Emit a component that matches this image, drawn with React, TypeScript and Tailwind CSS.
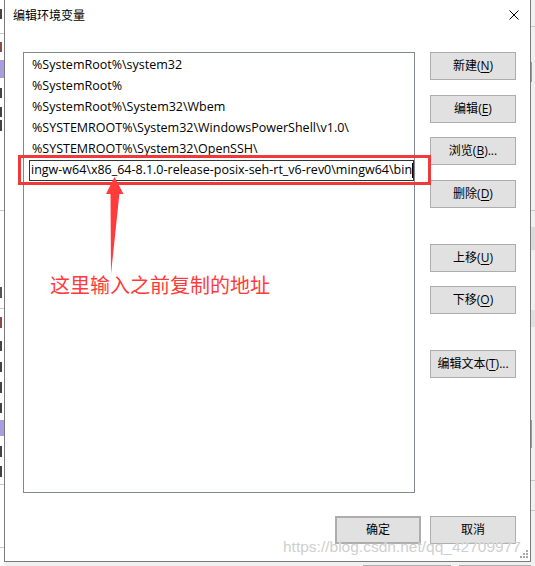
const paths = [
  "%SystemRoot%\\system32",
  "%SystemRoot%",
  "%SystemRoot%\\System32\\Wbem",
  "%SYSTEMROOT%\\System32\\WindowsPowerShell\\v1.0\\",
  "%SYSTEMROOT%\\System32\\OpenSSH\\",
];

const btn =
  "flex h-[28px] w-[86px] items-center justify-center border border-[#adadad] bg-[#e1e1e1] text-[12px] leading-none text-black";

function Key({ label, k, tail = "" }: { label: string; k: string; tail?: string }) {
  return (
    <span>
      {label}(<span className="underline underline-offset-2">{k}</span>){tail}
    </span>
  );
}

function LeftStrip() {
  return (
    <div className="flex h-[566px] w-[4px] shrink-0 flex-col bg-white">
      <div className="mt-[9px] h-[10px] w-[2px] bg-[#444]" />
      <div className="mt-[14px] h-[1px] w-full bg-[#c8c8c8]" />
      <div className="mt-[8px] h-[10px] w-[2px] bg-[#8a4b4b]" />
      <div className="mt-[8px] h-[18px] w-full bg-[#a99de0]" />
      <div className="mt-[10px] h-[10px] w-[2px] bg-[#444]" />
      <div className="mt-[9px] h-[10px] w-[2px] bg-[#444]" />
      <div className="mt-[3px] h-[11px] w-[2px] bg-[#444]" />
      <div className="mt-[79px] h-[1px] w-full bg-[#c8c8c8]" />
      <div className="mt-[76px] h-[11px] w-[2px] bg-[#555]" />
      <div className="mt-[10px] h-[1px] w-full bg-[#c8c8c8]" />
      <div className="mt-[8px] h-[11px] w-[2px] bg-[#8a4b4b]" />
      <div className="mt-[13px] h-[10px] w-[2px] bg-[#444]" />
      <div className="mt-[11px] h-[10px] w-[2px] bg-[#444]" />
      <div className="mt-[10px] h-[11px] w-[2px] bg-[#444]" />
      <div className="mt-[10px] h-[10px] w-[2px] bg-[#444]" />
      <div className="mt-[7px] h-[16px] w-full bg-[#a99de0]" />
      <div className="mt-[10px] h-[11px] w-[2px] bg-[#444]" />
      <div className="mt-[9px] h-[11px] w-[2px] bg-[#444]" />
      <div className="mt-[7px] h-[1px] w-full bg-[#c8c8c8]" />
      <div className="mt-[62px] h-[1px] w-full bg-[#c8c8c8]" />
    </div>
  );
}

function RightStrip() {
  return (
    <div className="flex h-[566px] flex-1 flex-col bg-[#f0f0f0]">
      <div className="mt-[26px] h-[1px] w-full bg-[#c8c8c8]" />
      <div className="mt-[35px] h-[20px] w-[1px] bg-[#9a8fd6]" />
      <div className="mt-[128px] h-[1px] w-full bg-[#c8c8c8]" />
      <div className="mt-[16px] h-[23px] w-full bg-[#dadada]" />
      <div className="mt-[60px] h-[17px] w-full bg-[#e0e0e0]" />
      <div className="mt-[93px] h-[28px] w-[1px] bg-[#9a8fd6]" />
      <div className="mt-[32px] h-[1px] w-full bg-[#c8c8c8]" />
      <div className="mt-[29px] h-[1px] w-full bg-[#c8c8c8]" />
    </div>
  );
}

export default function App() {
  return (
    <div className="relative flex h-[566px] w-[535px] overflow-hidden bg-[#f0f0f0] font-['Open_Sans','Noto_Sans_CJK_SC',sans-serif] text-black">
      <LeftStrip />
      <div className="flex w-[527px] shrink-0 flex-col">
        <div className="flex h-[562px] flex-col border-x border-b border-[#7a7a7a] bg-white">
          <div className="flex h-[30px] items-center justify-between pl-[8px] pr-[10px]">
            <span className="text-[12px] font-['Noto_Sans_CJK_SC',sans-serif]">编辑环境变量</span>
            <svg width="10" height="10" viewBox="0 0 10 10" className="mr-[1px]">
              <path d="M0.5 0.5 L9.5 9.5 M9.5 0.5 L0.5 9.5" stroke="#000" strokeWidth="1" />
            </svg>
          </div>
          <div className="flex pl-[18px] pt-[22px]">
            <div className="h-[441px] w-[392px] border border-[#828790] pt-[1px]">
              {paths.map((p) => (
                <div key={p} className="h-[21px] whitespace-nowrap pl-[8px] text-[12.5px] leading-[21px]">
                  {p}
                </div>
              ))}
              <div className="ml-[5px] mt-[1px] flex h-[21px] items-center overflow-hidden border border-[#333] pl-[1px] text-[12.5px] whitespace-nowrap">
                <span>ingw-w64\x86_64-8.1.0-release-posix-seh-rt_v6-rev0\mingw64\bin</span>
                <span className="h-[15px] w-[1px] shrink-0 bg-black" />
              </div>
            </div>
            <div className="ml-[15px] flex flex-col">
              <button className={btn}>
                <Key label="新建" k="N" />
              </button>
              <button className={`${btn} mt-[15px]`}>
                <Key label="编辑" k="E" />
              </button>
              <button className={`${btn} mt-[14px]`}>
                <Key label="浏览" k="B" tail="..." />
              </button>
              <button className={`${btn} mt-[15px]`}>
                <Key label="删除" k="D" />
              </button>
              <button className={`${btn} mt-[36px]`}>
                <Key label="上移" k="U" />
              </button>
              <button className={`${btn} mt-[14px]`}>
                <Key label="下移" k="O" />
              </button>
              <button className={`${btn} mt-[36px]`}>
                <Key label="编辑文本" k="T" tail="..." />
              </button>
            </div>
          </div>
          <div className="flex gap-[9px] pl-[330px] pt-[23px]">
            <button className={`${btn} border-2 border-[#0078d7]`}>确定</button>
            <button className={btn}>取消</button>
          </div>
        </div>
        <div className="flex h-[4px] items-end">
          <div className="ml-[359px] h-[1px] w-[88px] bg-[#adadad]" />
          <div className="ml-[8px] h-[1px] flex-1 bg-[#adadad]" />
        </div>
      </div>
      <RightStrip />

      {/* annotation overlay */}
      <div className="pointer-events-none absolute left-[18px] top-[155px] h-[30px] w-[413px] border-[3px] border-[#f03a3a]" />
      <svg className="pointer-events-none absolute left-0 top-0" width="535" height="566">
        <polygon points="114.5,177 106,194 123.5,194" fill="#ff3b3b" />
        <polygon points="110.5,193 119.5,193 111,274" fill="#ff3b3b" />
        <g fill="#a8a8a8">
          <rect x="526" y="550" width="2" height="2" />
          <rect x="523" y="553" width="2" height="2" />
          <rect x="526" y="553" width="2" height="2" />
          <rect x="520" y="556" width="2" height="2" />
          <rect x="523" y="556" width="2" height="2" />
          <rect x="526" y="556" width="2" height="2" />
        </g>
      </svg>
      <div className="pointer-events-none absolute left-[50px] top-[275px] text-[20px] leading-[20px] text-[#ff3b3b] font-['Noto_Sans_CJK_SC',sans-serif]">
        这里输入之前复制的地址
      </div>
      <div className="pointer-events-none absolute left-[283px] top-[537px] text-[15.5px] leading-[20px] text-[#cfcfcf] font-['Liberation_Sans',Arial,sans-serif] [text-shadow:0_0_1px_#fff]">
        https://blog.csdn.net/qq_42709977
      </div>
    </div>
  );
}
